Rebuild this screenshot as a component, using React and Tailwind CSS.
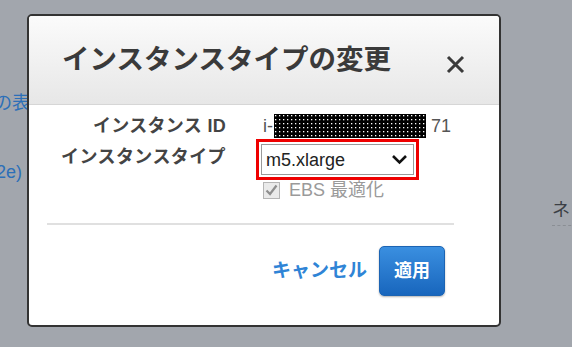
import React from "react";

const font = { fontFamily: '"Liberation Sans", "Noto Sans CJK JP", sans-serif' };

function Redacted() {
  return (
    <svg width="152" height="24" className="block">
      <defs>
        <pattern id="dots" width="4" height="4" patternUnits="userSpaceOnUse">
          <rect width="4" height="4" fill="#000" />
          <rect x="1" y="1" width="1.3" height="1.3" fill="#fff" />
        </pattern>
      </defs>
      <rect width="152" height="24" fill="url(#dots)" />
    </svg>
  );
}

export default function App() {
  return (
    <div
      className="relative w-[572px] h-[347px] overflow-hidden bg-[#a2a6ad]"
      style={font}
    >
      {/* background page fragments */}
      <div className="absolute left-[-6px] top-[94px] text-[18px] text-[#2c6fb8] leading-none">
        の表
      </div>
      <div className="absolute left-[-4px] top-[163px] text-[18px] text-[#2c6fb8] leading-none">
        2e)
      </div>
      <div className="absolute left-[552px] top-[201px] text-[18px] text-[#3b3f45] leading-none">
        ネ
      </div>
      <div className="absolute left-[552px] top-[225px] w-[30px] border-t border-dashed border-[#8a8e94]" />

      {/* modal */}
      <div className="absolute left-[27px] top-[14px] w-[474px] h-[313px] rounded-[5px] border-2 border-[#333] bg-white overflow-hidden flex flex-col">
        <div className="h-[89px] shrink-0 flex items-center justify-between pl-[33px] pr-[34px] bg-gradient-to-b from-[#fbfbfb] to-[#e7e7e7] border-b border-[#d6d6d6]">
          <div className="text-[27.5px] font-bold text-[#3a3a3a]">
            インスタンスタイプの変更
          </div>
          <svg width="19" height="19" viewBox="0 0 19 19" className="mt-[8px]">
            <path d="M2 2 L17 17 M17 2 L2 17" stroke="#3a3a3a" strokeWidth="3" />
          </svg>
        </div>

        <div className="flex flex-col pt-[9px]">
          <div className="grid grid-cols-[197px_1fr] gap-x-[37px] items-center text-[18px] text-[#444]">
            <div className="text-right font-bold leading-[24px] tracking-[0.3px]">インスタンス ID</div>
            <div className="flex items-center text-[#555] leading-[24px]">
              <span className="w-[11px]">i-</span>
              <Redacted />
              <span className="ml-[5px]">71</span>
            </div>

            <div className="text-right font-bold leading-[24px] mb-[4px] tracking-[0.4px]">インスタンスタイプ</div>
            <div className="mt-[1px] -ml-[7px] w-[163px] h-[41px] border-[3px] border-[#ef0000] bg-white p-[2px]">
              <div className="h-full border border-[#9a9a9a] flex items-center justify-between pl-[4px] pr-[5px] text-[#222]">
                <span className="leading-none">m5.xlarge</span>
                <svg width="17" height="11" viewBox="0 0 17 11">
                  <path d="M2 2 L8.5 8.5 L15 2" fill="none" stroke="#111" strokeWidth="2.6" />
                </svg>
              </div>
            </div>

            <div />
            <div className="flex items-center text-[#9a9a9a] leading-[20px]">
              <span className="w-[17px] h-[17px] border border-[#b5b5b5] bg-[#eaeaea] flex items-center justify-center">
                <svg width="13" height="12" viewBox="0 0 13 12">
                  <path d="M1.5 6.5 L5 10 L11.5 1.5" fill="none" stroke="#8e8e8e" strokeWidth="2.2" />
                </svg>
              </span>
              <span className="ml-[9px]">EBS 最適化</span>
            </div>
          </div>

          <div className="ml-[18px] mr-[45px] mt-[23px] h-[2px] bg-[#e0e0e0]" />

          <div className="flex items-center justify-end pr-[54px] mt-[21px]">
            <span className="text-[19px] font-bold text-[#2f84d6] mr-[12px]">キャンセル</span>
            <button className="w-[66px] h-[50px] rounded-[5px] border border-[#1c64b3] bg-gradient-to-b from-[#3a8fe0] to-[#1866bd] text-white text-[18px] font-bold shadow-[0_1px_2px_rgba(0,0,0,0.3)]">
              適用
            </button>
          </div>
        </div>
      </div>
    </div>
  );
}
